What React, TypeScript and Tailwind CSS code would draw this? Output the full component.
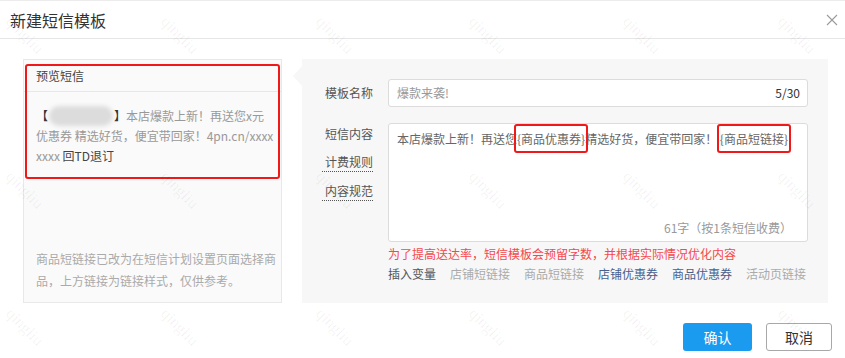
import React from 'react'

// 新建短信模板 — 弹窗：左侧预览，右侧编辑表单

const markCols = [0, 155, 310, 463, 617, 772]
const markRows = [8, 163, 300]

function Watermarks() {
  return (
    <div aria-hidden className="pointer-events-none absolute inset-0 z-20">
      {markRows.map((top) =>
        markCols.map((left) => (
          <span
            key={`${top}-${left}`}
            className="absolute rotate-45 text-[16px] font-['Liberation_Serif',serif] text-black/[0.06]"
            style={{ left: left + 2, top: top + 14 }}
          >
            qingliu
          </span>
        ))
      )}
    </div>
  )
}

function CloseIcon() {
  return (
    <svg width="12" height="12" viewBox="0 0 12 12" className="text-[#9a9a9a]">
      <path d="M1 1 L11 11 M11 1 L1 11" stroke="currentColor" strokeWidth="1.1" fill="none" />
    </svg>
  )
}

function Marked({ children }: { children: React.ReactNode }) {
  return (
    <span className="relative">
      {children}
      <span className="absolute -left-[3px] -right-[3px] -top-[6px] -bottom-[6px] rounded-[3px] border-2 border-[#f01818]" />
    </span>
  )
}

export default function App() {
  return (
    <div className="relative h-[358px] w-[845px] overflow-hidden border-t border-[#ececec] bg-white font-['Noto_Sans_CJK_SC',sans-serif] text-[12px] text-[#555]">
      {/* 标题栏 */}
      <div className="flex h-[38px] items-center justify-between border-b border-[#e6e6e6] pl-[10px] pr-[7px]">
        <span className="text-[16px] text-[#333]">新建短信模板</span>
        <CloseIcon />
      </div>

      <div className="flex gap-[20px] pl-[23px] pr-[17px] pt-[20px]">
        {/* 预览短信 */}
        <div className="relative flex h-[244px] w-[259px] flex-col border border-[#e8e8e8] bg-[#fafafa]">
          <div className="flex h-[32px] shrink-0 items-center border-b border-[#e8e8e8] pl-3 text-[#444]">预览短信</div>
          <div className="pl-3 pt-[14px] leading-[20px] text-[#999]">
            <div className="flex items-center whitespace-nowrap">
              <span className="text-[#333]">【</span>
              <span className="mx-[1px] h-[20px] w-[64px] rounded-full bg-[#dcdcdc] blur-[2px]" />
              <span className="text-[#333]">】</span>
              <span>本店爆款上新！再送您x元</span>
            </div>
            <div className="whitespace-nowrap">优惠券 精选好货，便宜带回家！4pn.cn/xxxx</div>
            <div className="whitespace-nowrap">
              xxxx <span className="text-[#444]">回TD退订</span>
            </div>
          </div>
          <p className="mt-auto w-[256px] pb-[10px] pl-3 leading-[22px] text-[#aaa]">
            商品短链接已改为在短信计划设置页面选择商品，上方链接为链接样式，仅供参考。
          </p>
          <div className="pointer-events-none absolute left-[1px] right-[1px] top-[4px] h-[115px] rounded-[3px] border-2 border-[#f01818]" />
        </div>

        {/* 编辑区 */}
        <div className="relative h-[244px] flex-1 bg-[#f7f7f7] pl-[20px] pr-[20px] pt-[20px]">
          <div className="absolute -left-[9px] top-[7px] h-0 w-0 border-y-[10px] border-r-[9px] border-y-transparent border-r-[#f7f7f7]" />

          <div className="flex items-center">
            <div className="w-[51px] text-right">模板名称</div>
            <div className="ml-[15px] flex h-[28px] flex-1 items-center justify-between rounded-[3px] border border-[#dcdcdc] bg-white pl-[8px] pr-[7px]">
              <span className="text-[#999]">爆款来袭!</span>
              <span className="text-[#333]">5/30</span>
            </div>
          </div>

          <div className="mt-[16px] flex">
            <div className="flex w-[51px] flex-col text-right">
              <div className="mt-[1px] leading-[20px]">短信内容</div>
              <div className="mt-[9px] border-b border-dotted border-[#555] leading-[18px]">计费规则</div>
              <div className="mt-[10px] border-b border-dotted border-[#555] leading-[18px]">内容规范</div>
            </div>
            <div className="ml-[15px] flex-1">
              <div className="flex h-[119px] flex-col rounded-[3px] border border-[#dcdcdc] bg-white">
                <div className="whitespace-nowrap pl-[8px] pt-[5px] leading-[20px] text-[#666]">
                  本店爆款上新！再送您<Marked>{'{商品优惠券}'}</Marked>精选好货，便宜带回家！ <Marked>{'{商品短链接}'}</Marked>
                </div>
                <div className="mt-auto self-end pb-[3px] pr-[15px] leading-[20px] text-[#999]">61字（按1条短信收费）</div>
              </div>
              <div className="mt-[2px] leading-[20px] text-[#f5484d]">为了提高送达率，短信模板会预留字数，并根据实际情况优化内容</div>
              <div className="flex gap-[14px] leading-[20px]">
                <span className="text-[#555]">插入变量</span>
                <span className="text-[#aaa]">店铺短链接</span>
                <span className="text-[#aaa]">商品短链接</span>
                <span className="text-[#4a5f8c]">店铺优惠券</span>
                <span className="text-[#4a5f8c]">商品优惠券</span>
                <span className="text-[#aaa]">活动页链接</span>
              </div>
            </div>
          </div>
        </div>
      </div>

      {/* 底部按钮 */}
      <div className="mt-[20px] flex justify-end gap-[14px] pr-[13px] text-[14px]">
        <button className="h-[28px] w-[69px] rounded-[3px] bg-[#1a9bf0] text-white">确认</button>
        <button className="h-[28px] w-[66px] rounded-[3px] border border-[#a8a8a8] bg-white text-[#333]">取消</button>
      </div>

      <Watermarks />
    </div>
  )
}
